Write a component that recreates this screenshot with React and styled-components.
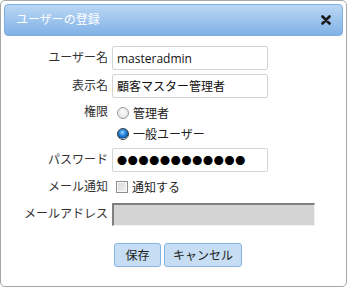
import React from "react";
import styled, { createGlobalStyle } from "styled-components";

const Global = createGlobalStyle`
  html, body { margin: 0; padding: 0; background: #fff; }
  body { font-family: "Open Sans", "Noto Sans CJK JP", sans-serif; }
  * { box-sizing: border-box; }
`;

const Dialog = styled.div`
  width: 347px;
  height: 287px;
  border: 1px solid #a6a6a6;
  border-radius: 5px;
  background: #fff;
  padding: 3px;
  display: flex;
  flex-direction: column;
  font-family: "Open Sans", "Noto Sans CJK JP", sans-serif;
  font-size: 12px;
  color: #333;
`;

const TitleBar = styled.div`
  height: 32px;
  border: 1px solid #7eaee0;
  border-radius: 4px;
  background: linear-gradient(to bottom, #bad7f3 0%, #9dc4ee 50%, #80b1e6 100%);
  display: flex;
  align-items: center;
  justify-content: space-between;
  padding: 0 10px 0 11px;
`;

const Title = styled.span`
  color: #fff;
  font-size: 12px;
  line-height: 1;
`;

const CloseBtn = styled.button`
  border: 0;
  background: none;
  padding: 0;
  width: 12px;
  height: 12px;
  display: flex;
  align-items: center;
  justify-content: center;
  cursor: pointer;
`;

const Form = styled.div`
  display: grid;
  grid-template-columns: 104px 1fr;
  column-gap: 4px;
  row-gap: 4px;
  padding-top: 10px;
  align-items: center;
`;

const Label = styled.label`
  text-align: right;
  color: #333;
  font-size: 12px;
  line-height: 16px;
  align-self: ${(p) => (p.$top ? "start" : "center")};
  padding-top: ${(p) => (p.$top ? "2px" : "0")};
  white-space: nowrap;
`;

const TextInput = styled.input`
  width: ${(p) => p.$w || 156}px;
  height: 24px;
  border: 1px solid #d4d4d4;
  border-radius: 2px;
  padding: 0 4px;
  font-family: "Open Sans", "Noto Sans CJK JP", sans-serif;
  font-size: 12px;
  color: #111;
  background: #fff;
  outline: none;
`;

const PasswordInput = styled(TextInput)`
  font-family: "Noto Sans CJK JP", sans-serif;
  font-size: 10px;
  letter-spacing: 0.75px;
  color: #000;
`;

const DisabledInput = styled.input`
  width: 203px;
  height: 23px;
  border-style: solid;
  border-width: 2px 1px 1px 2px;
  border-color: #7f7f7f #f2f2f2 #f2f2f2 #7f7f7f;
  background: #d4d4d4;
  outline: none;
  margin-top: 1px;
`;

const RadioGroup = styled.div`
  display: flex;
  flex-direction: column;
`;

const OptionRow = styled.label`
  display: flex;
  align-items: center;
  height: 21px;
  gap: 4px;
  padding-left: 5px;
  font-size: 12px;
  color: #222;
`;

const Radio = styled.input.attrs({ type: "radio" })`
  appearance: none;
  margin: 0;
  width: 12px;
  height: 12px;
  border-radius: 50%;
  border: 1px solid #9a9a9a;
  background: radial-gradient(circle at 50% 40%, #fdfdfd 0%, #dcdcdc 100%);
  &:checked {
    border-color: #3c3c3c;
    background: radial-gradient(circle at 45% 35%, #9fd3ff 0%, #2a8ae0 35%, #0b4f9a 70%, #fdfdfd 72%, #d0d0d0 100%);
  }
`;

const Check = styled.input.attrs({ type: "checkbox" })`
  appearance: none;
  margin: 0;
  width: 12px;
  height: 12px;
  border: 1px solid #8e8e8e;
  background: linear-gradient(135deg, #d6d6d6 0%, #f4f4f4 100%);
  box-shadow: inset 0 0 0 1px #f8f8f8;
`;

const CheckRow = styled(OptionRow)`
  padding-left: 4px;
  height: 22px;
`;

const Buttons = styled.div`
  grid-column: 2;
  display: flex;
  gap: 3px;
  margin-top: 13px;
  padding-left: 2px;
`;

const Button = styled.button`
  height: 24px;
  min-width: 47px;
  padding: 0 8px;
  border: 1px solid #85b4e3;
  border-radius: 3px;
  background: #c6ddf3;
  color: #222;
  font-family: "Open Sans", "Noto Sans CJK JP", sans-serif;
  font-size: 12px;
  cursor: pointer;
`;

export default function App() {
  return (
    <>
      <Global />
      <Dialog>
        <TitleBar>
          <Title>ユーザーの登録</Title>
          <CloseBtn aria-label="close">
            <svg width="10" height="10" viewBox="0 0 10 10">
              <path d="M1.5 1.5 L8.5 8.5 M8.5 1.5 L1.5 8.5" stroke="#1a1a1a" strokeWidth="2.6" strokeLinecap="round" />
            </svg>
          </CloseBtn>
        </TitleBar>
        <Form>
          <Label>ユーザー名</Label>
          <TextInput defaultValue="masteradmin" />
          <Label>表示名</Label>
          <TextInput defaultValue="顧客マスター管理者" />
          <Label $top>権限</Label>
          <RadioGroup>
            <OptionRow>
              <Radio name="role" />
              管理者
            </OptionRow>
            <OptionRow>
              <Radio name="role" defaultChecked />
              一般ユーザー
            </OptionRow>
          </RadioGroup>
          <Label>パスワード</Label>
          <PasswordInput type="text" readOnly aria-label="パスワード" value="●●●●●●●●●●●●" />
          <Label>メール通知</Label>
          <CheckRow>
            <Check />
            通知する
          </CheckRow>
          <Label>メールアドレス</Label>
          <DisabledInput disabled />
          <Buttons>
            <Button>保存</Button>
            <Button>キャンセル</Button>
          </Buttons>
        </Form>
      </Dialog>
    </>
  );
}
